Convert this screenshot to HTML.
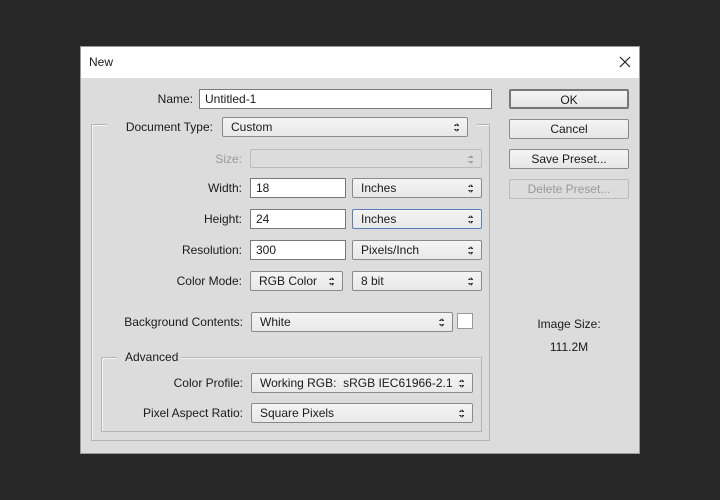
<!DOCTYPE html>
<html><head><style>
*{box-sizing:border-box;margin:0;padding:0}
body{width:720px;height:500px;background:#282828;position:relative;overflow:hidden;font-family:"Liberation Sans",sans-serif;font-size:12px;color:#1a1a1a}
.dlg{position:absolute;left:80px;top:46px;width:560px;height:408px;background:#dcdcdc;border:1px solid #999}
.title{position:absolute;left:0;top:0;width:558px;height:31px;background:#fff}
.a{position:absolute}
.lbl{position:absolute;text-align:right;white-space:nowrap;line-height:20px}
.inp{position:absolute;background:#fff;border:1px solid #7a7a7a;padding-left:5px;line-height:18px;height:20px}
.sel{position:absolute;background:linear-gradient(#f4f4f4,#e8e8e8);border:1px solid #8a8a8a;border-radius:2px;padding-left:8px;line-height:18px;height:20px}
.sel:after{content:"";position:absolute;right:8px;top:5px;width:5px;height:9px;background:
linear-gradient(to bottom right,transparent 50%,#333 50%) 0 0/2.5px 3px no-repeat,
linear-gradient(to bottom left,transparent 50%,#333 50%) 2.5px 0/2.5px 3px no-repeat,
linear-gradient(to top right,transparent 50%,#333 50%) 0 6px/2.5px 3px no-repeat,
linear-gradient(to top left,transparent 50%,#333 50%) 2.5px 6px/2.5px 3px no-repeat}
.dis{color:#999;border-color:#bbb;background:#dcdcdc}
.dis:after{opacity:.4}
.btn{position:absolute;left:428px;width:120px;height:20px;border:1px solid #8a8a8a;border-radius:2px;background:linear-gradient(#f4f4f4,#e6e6e6);text-align:center;line-height:18px}
.box{position:absolute;border:1px solid #b5b5b5;box-shadow:1px 1px 0 #f4f4f4 inset}
</style></head><body>
<div class="dlg">
<div class="title"><span class="a" style="left:8px;top:8px">New</span>
<svg class="a" style="left:538px;top:9px" width="12" height="12"><path d="M1 1L11 11M11 1L1 11" stroke="#222" stroke-width="1.2"/></svg></div>

<div class="lbl" style="right:446px;top:42px">Name:</div>
<div class="inp" style="left:118px;top:42px;width:293px">Untitled-1</div>

<div class="box" style="left:10px;top:77px;width:399px;height:317px"></div>
<div class="a" style="left:26px;top:68px;width:370px;height:22px;background:#dcdcdc"></div>
<div class="lbl" style="right:426px;top:70px">Document Type:</div>
<div class="sel" style="left:141px;top:70px;width:246px">Custom</div>

<div class="lbl" style="right:397px;top:102px;color:#999">Size:</div>
<div class="sel dis" style="left:169px;top:102px;width:232px;height:19px"></div>

<div class="lbl" style="right:397px;top:131px">Width:</div>
<div class="inp" style="left:169px;top:131px;width:96px">18</div>
<div class="sel" style="left:271px;top:131px;width:130px">Inches</div>

<div class="lbl" style="right:397px;top:162px">Height:</div>
<div class="inp" style="left:169px;top:162px;width:96px">24</div>
<div class="sel" style="left:271px;top:162px;width:130px;border-color:#5a7fb8">Inches</div>

<div class="lbl" style="right:397px;top:193px">Resolution:</div>
<div class="inp" style="left:169px;top:193px;width:96px">300</div>
<div class="sel" style="left:271px;top:193px;width:130px">Pixels/Inch</div>

<div class="lbl" style="right:397px;top:224px">Color Mode:</div>
<div class="sel" style="left:169px;top:224px;width:93px">RGB Color</div>
<div class="sel" style="left:271px;top:224px;width:130px">8 bit</div>

<div class="lbl" style="right:396px;top:265px">Background Contents:</div>
<div class="sel" style="left:170px;top:265px;width:202px">White</div>
<div class="a" style="left:376px;top:266px;width:16px;height:16px;background:#fff;border:1px solid #999"></div>

<div class="box" style="left:20px;top:310px;width:381px;height:75px"></div>
<div class="a" style="left:36px;top:302px;width:64px;height:16px;background:#dcdcdc;padding-left:8px;line-height:16px">Advanced</div>

<div class="lbl" style="right:396px;top:326px">Color Profile:</div>
<div class="sel" style="left:170px;top:326px;width:222px">Working RGB: &nbsp;sRGB IEC61966-2.1</div>
<div class="lbl" style="right:396px;top:356px">Pixel Aspect Ratio:</div>
<div class="sel" style="left:170px;top:356px;width:222px">Square Pixels</div>

<div class="btn" style="top:42px;border:2px solid #777">OK</div>
<div class="btn" style="top:72px">Cancel</div>
<div class="btn" style="top:102px">Save Preset...</div>
<div class="btn" style="top:132px;color:#999;border-color:#bbb;background:#dcdcdc">Delete Preset...</div>

<div class="a" style="left:428px;top:270px;width:120px;text-align:center">Image Size:</div>
<div class="a" style="left:428px;top:293px;width:120px;text-align:center">111.2M</div>
</div>
</body></html>
